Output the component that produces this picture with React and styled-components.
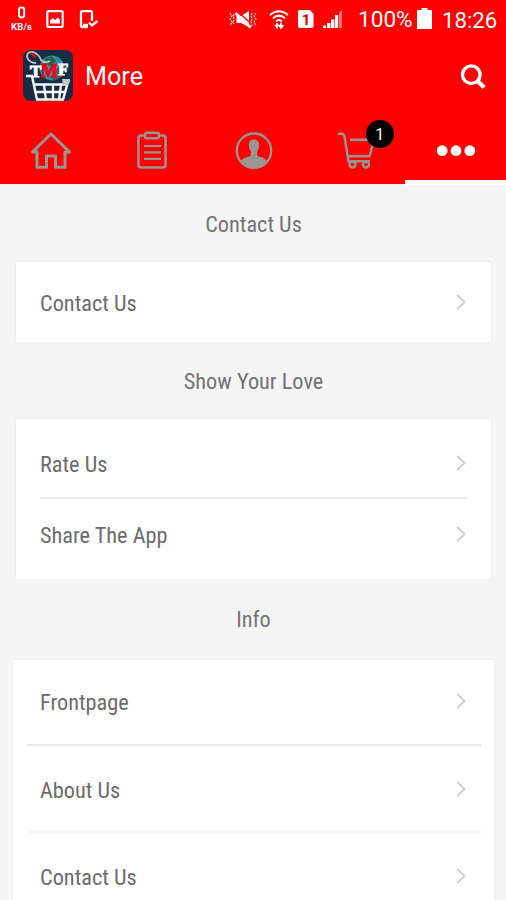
import React from "react";
import styled, { createGlobalStyle } from "styled-components";

const GlobalStyle = createGlobalStyle`
  * { box-sizing: border-box; }
  body { margin: 0; background: #f5f5f5; overflow: hidden; font-family: Roboto, sans-serif; }
`;

const Screen = styled.main`
  width: 506px;
  height: 900px;
  overflow: hidden;
  background: #f5f5f5;
`;

const Header = styled.header`
  height: 184px;
  background: #fe0000;
  color: #fff;
`;

const StatusBar = styled.div`
  height: 40px;
  display: flex;
  align-items: center;
  justify-content: space-between;
`;

const StatusGroup = styled.div`
  display: flex;
  align-items: center;
`;

const StatusText = styled.span`
  width: ${(p) => p.$width}px;
  font-size: ${(p) => p.$size}px;
  line-height: 40px;
  white-space: nowrap;
`;

const TitleBar = styled.div`
  height: 76px;
  display: flex;
  align-items: center;
  padding: 0 20px 4px 23px;
`;

const Title = styled.h1`
  flex: 1;
  margin: 0 0 0 11px;
  padding-top: 2px;
  font-size: 25.2px;
  font-weight: 400;
  line-height: 40px;
`;

const IconButton = styled.button`
  display: flex;
  padding: 2px 0 0;
  border: 0;
  background: none;
  color: inherit;
`;

const Tabs = styled.nav`
  height: 68px;
  display: grid;
  grid-template-columns: repeat(5, 1fr);
`;

const Tab = styled.div`
  display: flex;
  justify-content: center;
  padding: 14px 0 0 ${(p) => p.$shift || 0}px;
  height: 69px;
  color: ${(p) => (p.$active ? "#fff" : "#999590")};
  border-bottom: ${(p) => (p.$active ? "5px solid #fff" : "0")};
`;

const CartHolder = styled.div`
  position: relative;
  width: 42px;
  height: 42px;
`;

const Badge = styled.span`
  position: absolute;
  left: 30px;
  top: -10px;
  width: 28px;
  height: 28px;
  border-radius: 50%;
  background: #000;
  color: #fff;
  font-size: 16px;
  line-height: 29px;
  text-align: center;
`;

const SectionTitle = styled.h2`
  margin: 0;
  height: ${(p) => p.$height}px;
  padding: ${(p) => p.$top}px 0 0 1px;
  display: flex;
  align-items: center;
  justify-content: center;
  color: #737373;
  font-weight: 400;
`;

const Condensed = styled.span`
  padding-bottom: 2px;
  font-family: "Roboto Condensed", Roboto, sans-serif;
  font-stretch: 75%;
  font-size: 22.3px;
  line-height: 30px;
  white-space: nowrap;
`;

const Card = styled.section`
  margin: 0 ${(p) => (p.$wide ? "12px 0 13px" : "15px 0 16px")};
  padding: ${(p) => p.$padding};
  background: #fff;
  box-shadow: 0 0 2px #e2e2e2;
`;

const Row = styled.div`
  height: ${(p) => p.$height}px;
  padding: ${(p) => p.$top || 0}px 24px ${(p) => p.$bottom || 0}px;
  display: flex;
  align-items: center;
  justify-content: space-between;
  color: #6c6c6c;
  border-bottom: ${(p) => (p.$line ? `2px solid ${p.$line}` : "0")};
`;

const InsetCard = styled(Card)`
  ${Row} { margin: 0 24px; padding-left: 0; padding-right: 0; }
`;

const WideCard = styled(Card)`
  ${Row} { padding-left: 13px; padding-right: 14px; }
`;

const ChevronSvg = styled.svg`
  margin-bottom: 4px;
`;

const Chevron = () => (
  <ChevronSvg width="12" height="18" viewBox="0 0 12 18" fill="none" stroke="#d0d0d0" strokeWidth="2">
    <path d="M2.3 2 L9.6 9 L2.3 16" />
  </ChevronSvg>
);

const DataRateIcon = () => (
  <svg width="24" height="24" viewBox="0 0 24 24">
    <rect x="9" y="-.5" width="5.2" height="10" rx="2.4" fill="none" stroke="#fff" strokeWidth="1.9" overflow="visible" />
    <text x="1" y="21.5" fill="#fff" fontSize="9.5" fontWeight="700" fontFamily="Roboto" textLength="21">KB/s</text>
  </svg>
);

const PictureIcon = () => (
  <svg width="18" height="20" viewBox="0 0 18 20">
    <rect x="1.3" y="1.2" width="15.4" height="15.8" rx="1.5" fill="none" stroke="#fff" strokeWidth="2.2" />
    <path d="M4 13.5V10.5L7 8L9 10L12 7.5L14 10V13.5Z" fill="#fff" />
  </svg>
);

const PhoneCheckIcon = () => (
  <svg width="20" height="20" viewBox="0 0 20 20" fill="none" stroke="#fff">
    <path d="M13 11V2.7Q13 1.2 11.5 1.2H3.5Q2 1.2 2 2.7V15.5Q2 17 3.5 17H9" strokeWidth="2.3" />
    <path d="M4 15H9M10 12.5L13 15.5L18.5 11" strokeWidth="2.3" />
  </svg>
);

const MuteIcon = () => (
  <svg width="28" height="20" viewBox="0 0 28 20">
    <path d="M7.5 6H12L20 1V17L12 13H7.5Z" fill="#fff" />
    <path d="M8.8 1.5L23.5 15" stroke="#fe0000" strokeWidth="1.4" />
    <path d="M6.5 3L21.5 17.5" stroke="#fff" strokeWidth="2.8" />
    <path d="M1 3L3 6L1 9L3 12L1 16M5 4L4 6L5 9L4 12L5 15M23 3L22 6L23 9L22 12L23 16M27 3L25 6L27 9L25 12L27 16" fill="none" stroke="#fff" strokeWidth="1.2" strokeDasharray="2 1" opacity=".85" />
  </svg>
);

const WifiIcon = () => (
  <svg width="20" height="21" viewBox="0 0 20 21" fill="none" stroke="#fff" strokeWidth="2">
    <path d="M1 5Q10 -2.5 19 5M4 8.3Q10 3 16 8.3M7 11.4Q10 8.5 13 11.4" />
    <path d="M8 18.5V14M6.5 16.5L8 14L9.5 16M12 12.5V17M10 15L12 18L14.5 15" strokeWidth="1.7" />
  </svg>
);

const SimIcon = () => (
  <svg width="16" height="20" viewBox="0 0 16 20">
    <path d="M0 2Q0 0 2 0H12L15.5 4V16Q15.5 18 13.5 18H2Q0 18 0 16Z" fill="#fff" />
    <text x="8" y="14.5" textAnchor="middle" fontSize="15" fontWeight="700" fontFamily="Roboto" fill="#d80000">1</text>
  </svg>
);

const SignalIcon = () => (
  <svg width="20" height="20" viewBox="0 0 20 20" fill="#fff">
    <rect x="0" y="15.5" width="3" height="2.5" />
    <rect x="4" y="13" width="3.4" height="5" />
    <rect x="8" y="9.5" width="3.4" height="8.5" />
    <rect x="12" y="5" width="3.2" height="13" />
    <path d="M16 2.5L19 0V18H16Z" opacity=".45" />
  </svg>
);

const BatteryIcon = () => (
  <svg width="15" height="22" viewBox="0 0 15 22" fill="#fff">
    <path d="M4.5 -1H10.5V1H15V20H0V1H4.5Z" />
  </svg>
);

const SearchIcon = () => (
  <svg width="26" height="26" viewBox="0 0 26 26" fill="none" stroke="#fff">
    <circle cx="11.3" cy="10.7" r="8.8" strokeWidth="3.4" />
    <path d="M17 16.5L24.2 23.5" strokeWidth="4.4" />
  </svg>
);

const AppLogo = () => (
  <svg width="51" height="52" viewBox="0 0 51 52">
    <rect x="0" y="0" width="50" height="51" rx="8" fill="#182c43" />
    <circle cx="29" cy="18" r="12.5" fill="#2d8da3" />
    <path d="M22 9L29 6L33 11L28 16L22 15ZM31 19L39 17L37 28L29 31Z" fill="#28634f" />
    <path d="M13 13Q6 13 4 7Q4 1 10 2Q16 4 18 10Q22 14 27 11" fill="none" stroke="#bdc3c8" strokeWidth="1.8" />
    <path d="M8 3L13 7" stroke="#e00c1c" strokeWidth="2.5" />
    <g fontFamily="Liberation Serif" fontWeight="700" strokeWidth="1">
      <text x="7" y="27" fontSize="17" fill="#fff" stroke="#fff">T</text>
      <text x="18" y="26.5" fontSize="18" fill="#e50b20" stroke="#e50b20">M</text>
      <text x="35" y="25" fontSize="17" fill="#fff" stroke="#fff">F</text>
    </g>
    <path d="M3 26H9L14 49.5H40L45 32" fill="none" stroke="#f8fafc" strokeWidth="2.4" />
    <path d="M10 34.5H45M13 42H42M21 35L23 50M30 35V50M38 35L36 50" stroke="#f8fafc" strokeWidth="2.3" />
    <path d="M39 29H47V32L44 35H40Z" fill="#c4c5c4" />
  </svg>
);

const HomeIcon = () => (
  <svg width="42" height="42" viewBox="0 0 42 42" fill="none" stroke="currentColor" strokeWidth="3" strokeLinejoin="round">
    <path d="M21 4L2.5 22H7V37.3H16.5V26H25.5V37.3H35V22H39.5Z" />
  </svg>
);

const ClipboardIcon = () => (
  <svg width="42" height="42" viewBox="0 0 42 42" fill="none" stroke="currentColor" strokeWidth="2.5">
    <path d="M14 5.5H10Q7.5 5.5 7.5 8V35Q7.5 37.5 10 37.5H32Q34.5 37.5 34.5 35V8Q34.5 5.5 32 5.5H28" />
    <rect x="14" y="2.8" width="14" height="5.5" rx="2" />
    <path d="M13 16H30M13 22.3H30M13 28.8H30" strokeWidth="2.2" />
  </svg>
);

const UserIcon = () => (
  <svg width="42" height="42" viewBox="0 0 42 42">
    <circle cx="21" cy="20.7" r="17.2" fill="none" stroke="currentColor" strokeWidth="2.3" />
    <path d="M21 9.5C14.5 9.5 15 17 17.8 21.5V25.5C15 27.5 10.5 27 8 31Q21 45 34 31C31.5 27 27 27.5 24.2 25.5V21.5C27 17 27.5 9.5 21 9.5Z" fill="currentColor" />
  </svg>
);

const CartIcon = () => (
  <svg width="42" height="42" viewBox="0 0 42 42" fill="none" stroke="currentColor" strokeWidth="2.4">
    <path d="M2 3.8H5.5Q8 4 8.5 6.5L12.5 31.3H34M14 9.8H38L33.5 26.3H12.5" />
    <circle cx="16.5" cy="34.5" r="3" />
    <circle cx="30" cy="34.5" r="3" />
  </svg>
);

const MoreIcon = () => (
  <svg width="42" height="42" viewBox="0 0 42 42" fill="currentColor">
    <circle cx="7.2" cy="20.7" r="5.4" /><circle cx="21" cy="20.7" r="5.4" /><circle cx="34.8" cy="20.7" r="5.4" />
  </svg>
);

const StatusSlot = styled.span`
  display: flex;
  margin-left: ${(p) => p.$gap}px;
  svg { overflow: visible; }
`;

const sections = [
  { title: "Contact Us", height: 78, top: 4, card: Card, rows: [{ label: "Contact Us", height: 80, top: 3 }] },
  { title: "Show Your Love", height: 77, top: 2, card: InsetCard, rows: [
    { label: "Rate Us", height: 80, top: 14, line: "#e9e9e9" },
    { label: "Share The App", height: 80, bottom: 7 },
  ] },
  { title: "Info", height: 81, top: 0, card: WideCard, padding: "0 13px 0 14px", wide: true, rows: [
    { label: "Frontpage", height: 86, top: 2, line: "#e9e9e9" },
    { label: "About Us", height: 87, top: 4, line: "#f5f5f5" },
    { label: "Contact Us", height: 87, top: 2 },
  ] },
];

function Section({ section }) {
  const Container = section.card;
  return (
    <>
      <SectionTitle $height={section.height} $top={section.top}><Condensed>{section.title}</Condensed></SectionTitle>
      <Container $wide={section.wide} $padding={section.padding || "0"}>
        {section.rows.map((row) => (
          <Row key={row.label} $height={row.height} $top={row.top} $bottom={row.bottom} $line={row.line}>
            <Condensed>{row.label}</Condensed>
            <Chevron />
          </Row>
        ))}
      </Container>
    </>
  );
}

export default function App() {
  return (
    <>
      <GlobalStyle />
      <Screen>
        <Header>
          <StatusBar>
            <StatusGroup>
              <StatusSlot $gap={10}><DataRateIcon /></StatusSlot>
              <StatusSlot $gap={12}><PictureIcon /></StatusSlot>
              <StatusSlot $gap={15}><PhoneCheckIcon /></StatusSlot>
            </StatusGroup>
            <StatusGroup>
              <StatusSlot $gap={0}><MuteIcon /></StatusSlot>
              <StatusSlot $gap={12}><WifiIcon /></StatusSlot>
              <StatusSlot $gap={9}><SimIcon /></StatusSlot>
              <StatusSlot $gap={9}><SignalIcon /></StatusSlot>
              <StatusSlot $gap={15}><StatusText $width={55} $size={22.6}>100%</StatusText></StatusSlot>
              <StatusSlot $gap={4}><BatteryIcon /></StatusSlot>
              <StatusSlot $gap={10}><StatusText $width={64} $size={22.2}>18:26</StatusText></StatusSlot>
            </StatusGroup>
          </StatusBar>
          <TitleBar>
            <AppLogo />
            <Title>More</Title>
            <IconButton aria-label="Search"><SearchIcon /></IconButton>
          </TitleBar>
          <Tabs>
            <Tab><HomeIcon /></Tab>
            <Tab $shift={1}><ClipboardIcon /></Tab>
            <Tab $shift={2}><UserIcon /></Tab>
            <Tab $shift={5}><CartHolder><CartIcon /><Badge>1</Badge></CartHolder></Tab>
            <Tab $active $shift={2}><MoreIcon /></Tab>
          </Tabs>
        </Header>
        {sections.map((section) => <Section key={section.title} section={section} />)}
      </Screen>
    </>
  );
}
